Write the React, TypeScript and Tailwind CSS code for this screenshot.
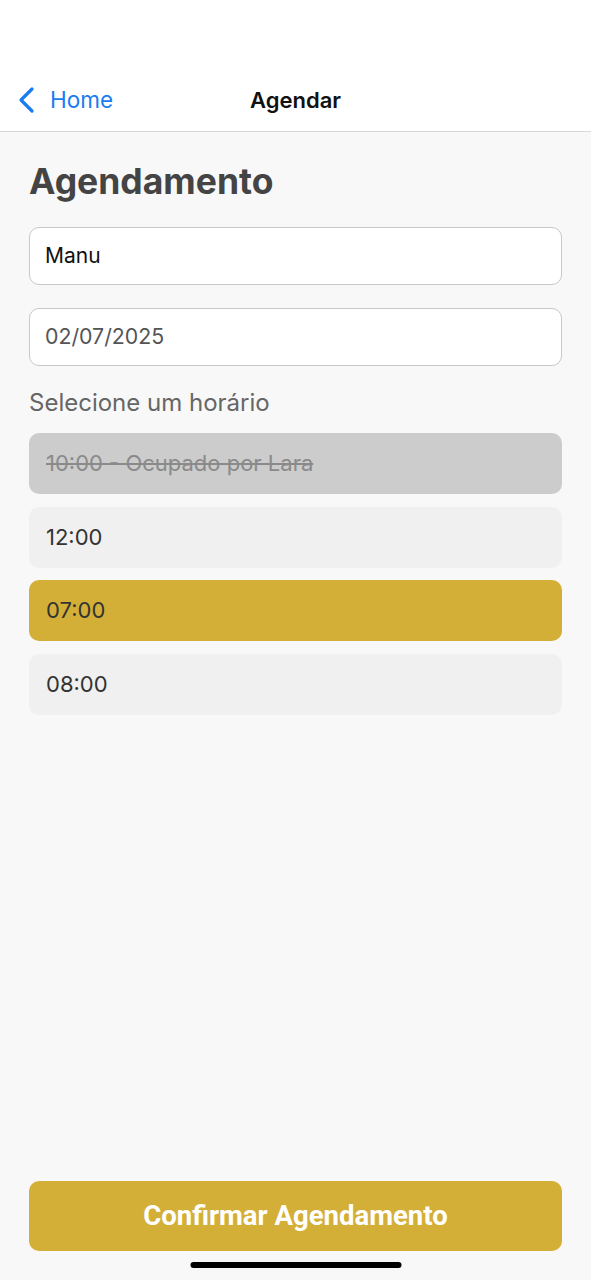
import React from 'react';

const slots = [
  { label: '10:00 - Ocupado por Lara', state: 'busy' },
  { label: '12:00', state: 'free' },
  { label: '07:00', state: 'selected' },
  { label: '08:00', state: 'free' },
];

const App: React.FC = () => {
  return (
    <div className="relative flex flex-col h-[1280px] w-full bg-[#f8f8f8] font-['Inter','Noto_Sans',sans-serif] overflow-hidden">
      {/* Header */}
      <header className="h-[132px] bg-white border-b border-[#d8d8d8] flex items-end">
        <div className="relative w-full h-[62px] flex items-center">
          <div className="flex items-center pl-[17px] text-[#1a7cf0]">
            <svg width="20" height="28" viewBox="0 0 20 28" fill="none">
              <path d="M15 3 L4 14 L15 25" stroke="currentColor" strokeWidth="3.2" strokeLinecap="round" strokeLinejoin="round" />
            </svg>
            <span className="ml-[13px] text-[22.5px] leading-none">Home</span>
          </div>
          <span className="absolute left-1/2 -translate-x-1/2 text-[22px] font-semibold text-[#111] leading-none">Agendar</span>
        </div>
      </header>

      {/* Body */}
      <main className="flex-1 flex flex-col px-[29px] pt-[28px]">
        <h1 className="text-[35.5px] font-bold text-[#444] leading-[44px]">Agendamento</h1>

        <div className="mt-[23px] h-[58px] rounded-[10px] border border-[#c8c8c8] bg-white flex items-center px-[15px] text-[21px] text-[#111]">
          Manu
        </div>
        <div className="mt-[23px] h-[58px] rounded-[10px] border border-[#c8c8c8] bg-white flex items-center px-[15px] text-[21.3px] text-[#555]">
          02/07/2025
        </div>

        <p className="mt-[22px] text-[24px] text-[#666] leading-[30px]">Selecione um horário</p>

        <div className="mt-[15px] flex flex-col gap-[12.5px]">
          {slots.map((s) => (
            <div
              key={s.label}
              className={
                'h-[61px] rounded-[10px] flex items-center px-[17px] text-[22px] ' +
                (s.state === 'busy'
                  ? 'bg-[#cccccc] text-[#8a8a8a] line-through'
                  : s.state === 'selected'
                  ? 'bg-[#d4af37] text-[#333]'
                  : 'bg-[#f0f0f0] text-[#333]')
              }
            >
              {s.label}
            </div>
          ))}
        </div>

        <div className="flex-1" />

        <button className="mb-[29px] h-[70px] w-full rounded-[10px] bg-[#d4af37] text-white text-[27.5px] font-bold font-['Roboto',sans-serif]">
          Confirmar Agendamento
        </button>
      </main>

      {/* Home indicator */}
      <div className="absolute bottom-[12px] left-1/2 -translate-x-1/2 w-[211px] h-[6px] rounded-full bg-black" />
    </div>
  );
};

export default App;
